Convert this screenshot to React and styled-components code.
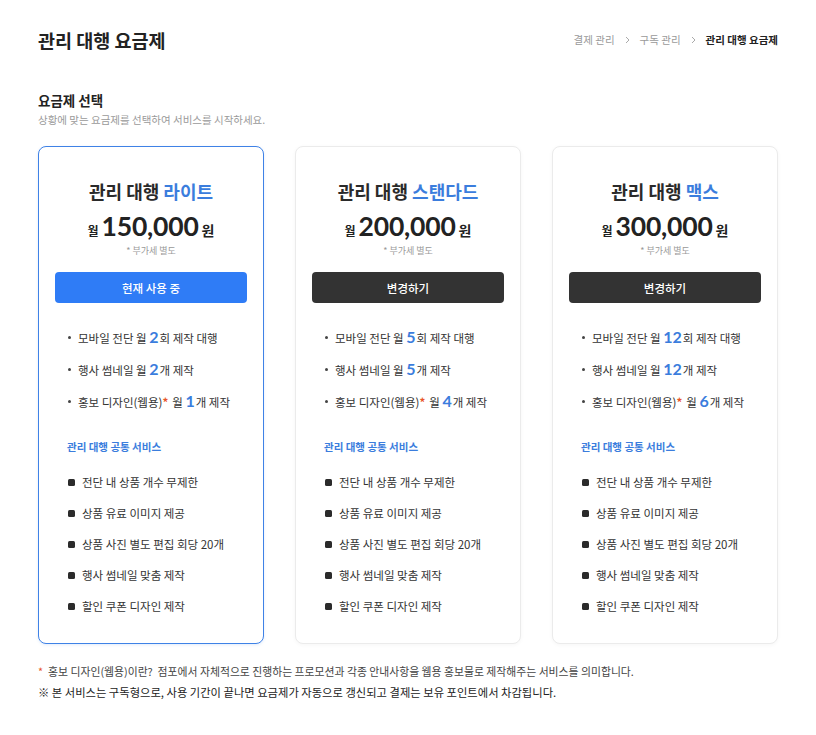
import React from "react";
import styled, { createGlobalStyle } from "styled-components";

const GlobalStyle = createGlobalStyle`
  html, body { margin: 0; padding: 0; background: #ffffff; }
  body {
    font-family: "Noto Sans CJK KR", "Noto Sans", sans-serif;
    color: #333;
    -webkit-font-smoothing: antialiased;
  }
  * { box-sizing: border-box; }
`;

const Page = styled.div`
  width: 816px;
  padding: 26px 38px 30px;
`;

const Header = styled.header`
  display: flex;
  justify-content: space-between;
  align-items: center;
  height: 28px;
`;

const PageTitle = styled.h1`
  margin: 0;
  font-size: 18.5px;
  line-height: 28px;
  font-weight: 700;
  color: #222;
`;

const Breadcrumb = styled.nav`
  display: flex;
  align-items: center;
  gap: 9px;
  font-size: 10.5px;
  line-height: 16px;
`;

const Crumb = styled.span`
  color: ${(p) => (p.$active ? "#222" : "#9a9a9a")};
  font-weight: ${(p) => (p.$active ? 700 : 400)};
`;

const Sep = styled.span`
  display: flex;
  align-items: center;
  padding: 0 1px;
`;

const SectionHead = styled.div`
  margin-top: 37px;
`;

const SectionTitle = styled.h2`
  margin: 0;
  font-size: 13.5px;
  line-height: 18px;
  font-weight: 700;
  color: #222;
`;

const SectionSub = styled.p`
  margin: 4px 0 0;
  font-size: 10.5px;
  line-height: 14px;
  color: #9a9a9a;
`;

const Cards = styled.div`
  margin-top: 19px;
  display: grid;
  grid-template-columns: repeat(3, 1fr);
  gap: 31px;
`;

const Card = styled.div`
  border: 1px solid ${(p) => (p.$current ? "#3f82e6" : "#ebebeb")};
  border-radius: 8px;
  background: #fff;
  box-shadow: ${(p) => (p.$current ? "0 1px 3px rgba(63,130,230,0.15)" : "0 1px 4px rgba(0,0,0,0.04)")};
  padding: 31px 16px 27px;
  height: 498px;
`;

const PlanName = styled.h3`
  margin: 0;
  text-align: center;
  font-size: 18px;
  line-height: 26px;
  font-weight: 700;
  color: #2a2a2a;
`;

const Accent = styled.span`
  color: #3b7ddd;
`;

const PriceRow = styled.div`
  margin-top: 6px;
  display: flex;
  justify-content: center;
  align-items: baseline;
  gap: 3px;
  height: 32px;
  line-height: 32px;
  color: #222;
`;

const Unit = styled.span`
  font-size: ${(p) => p.$size}px;
  font-weight: 700;
`;

const Amount = styled.span`
  font-family: "Lato", "Noto Sans", sans-serif;
  font-size: 26.5px;
  font-weight: 700;
  letter-spacing: -0.2px;
`;

const Vat = styled.div`
  margin-top: 2px;
  text-align: center;
  font-size: 9px;
  line-height: 14px;
  color: #999;
`;

const PlanButton = styled.button`
  display: block;
  width: 100%;
  height: 31px;
  margin-top: 14px;
  border: none;
  border-radius: 4px;
  background: ${(p) => (p.$current ? "#2f7cf6" : "#333333")};
  color: #fff;
  font-family: "Noto Sans CJK KR", "Noto Sans", sans-serif;
  font-size: 11.5px;
  font-weight: 500;
  cursor: pointer;
`;

const Body = styled.div`
  padding: 0 12px;
`;

const Features = styled.ul`
  list-style: none;
  margin: 24px 0 0;
  padding: 0;
  display: flex;
  flex-direction: column;
  gap: 12px;
`;

const Feature = styled.li`
  display: flex;
  align-items: baseline;
  height: 20px;
  font-size: 11.5px;
  line-height: 20px;
  color: #333;
  white-space: nowrap;
`;

const Dot = styled.span`
  flex: none;
  width: 3px;
  height: 3px;
  border-radius: 50%;
  background: #444;
  margin: 0 7px 0 1px;
  align-self: center;
`;

const Num = styled.span`
  font-family: "Lato", "Noto Sans", sans-serif;
  font-size: 16px;
  line-height: 20px;
  font-weight: 700;
  color: #3b7ddd;
  margin-right: 1px;
`;

const Star = styled.span`
  color: #e8562a;
  font-weight: 700;
  margin-right: 4px;
`;

const CommonTitle = styled.div`
  margin-top: 27px;
  font-size: 10.5px;
  line-height: 18px;
  font-weight: 700;
  color: #3b7ddd;
`;

const Services = styled.ul`
  list-style: none;
  margin: 16px 0 0;
  padding: 0;
  display: flex;
  flex-direction: column;
  gap: 11px;
`;

const Service = styled.li`
  display: flex;
  align-items: center;
  font-size: 11.5px;
  line-height: 20px;
  color: #333;
  white-space: nowrap;
`;

const Square = styled.span`
  flex: none;
  width: 7px;
  height: 7px;
  border-radius: 1.5px;
  background: #2b2b2b;
  margin: 0 7px 0 1px;
`;

const Notes = styled.div`
  margin-top: 17px;
  line-height: 21px;
`;

const Note = styled.p`
  margin: 0;
  font-size: ${(p) => (p.$dark ? "11.3px" : "10.85px")};
  font-weight: 400;
  color: ${(p) => (p.$dark ? "#222" : "#444")};
  white-space: nowrap;
`;

const NoteStar = styled.span`
  color: #e8562a;
  margin-right: 5px;
`;

const Chevron = () => (
  <svg width="5" height="8" viewBox="0 0 5 8" fill="none">
    <path d="M1 1 L4 4 L1 7" stroke="#aaa" strokeWidth="1" />
  </svg>
);

const plans = [
  { name: "라이트", price: "150,000", current: true, n: ["2", "2", "1"] },
  { name: "스탠다드", price: "200,000", current: false, n: ["5", "5", "4"] },
  { name: "맥스", price: "300,000", current: false, n: ["12", "12", "6"] },
];

const services = [
  "전단 내 상품 개수 무제한",
  "상품 유료 이미지 제공",
  "상품 사진 별도 편집 회당 20개",
  "행사 썸네일 맞춤 제작",
  "할인 쿠폰 디자인 제작",
];

function PlanCard({ plan }) {
  return (
    <Card $current={plan.current}>
      <PlanName>
        관리 대행 <Accent>{plan.name}</Accent>
      </PlanName>
      <PriceRow>
        <Unit $size={12}>월</Unit>
        <Amount>{plan.price}</Amount>
        <Unit $size={14}>원</Unit>
      </PriceRow>
      <Vat>* 부가세 별도</Vat>
      <PlanButton $current={plan.current}>
        {plan.current ? "현재 사용 중" : "변경하기"}
      </PlanButton>
      <Body>
        <Features>
          <Feature>
            <Dot />
            모바일 전단 월&nbsp;<Num>{plan.n[0]}</Num>회 제작 대행
          </Feature>
          <Feature>
            <Dot />
            행사 썸네일 월&nbsp;<Num>{plan.n[1]}</Num>개 제작
          </Feature>
          <Feature>
            <Dot />
            홍보 디자인(웹용)<Star>*</Star>월&nbsp;<Num>{plan.n[2]}</Num>개 제작
          </Feature>
        </Features>
        <CommonTitle>관리 대행 공통 서비스</CommonTitle>
        <Services>
          {services.map((s) => (
            <Service key={s}>
              <Square />
              {s}
            </Service>
          ))}
        </Services>
      </Body>
    </Card>
  );
}

export default function App() {
  return (
    <>
      <GlobalStyle />
      <Page>
        <Header>
          <PageTitle>관리 대행 요금제</PageTitle>
          <Breadcrumb>
            <Crumb>결제 관리</Crumb>
            <Sep><Chevron /></Sep>
            <Crumb>구독 관리</Crumb>
            <Sep><Chevron /></Sep>
            <Crumb $active>관리 대행 요금제</Crumb>
          </Breadcrumb>
        </Header>
        <SectionHead>
          <SectionTitle>요금제 선택</SectionTitle>
          <SectionSub>상황에 맞는 요금제를 선택하여 서비스를 시작하세요.</SectionSub>
        </SectionHead>
        <Cards>
          {plans.map((p) => (
            <PlanCard key={p.name} plan={p} />
          ))}
        </Cards>
        <Notes>
          <Note>
            <NoteStar>*</NoteStar>홍보 디자인(웹용)이란?&nbsp;&nbsp;점포에서 자체적으로 진행하는 프로모션과 각종 안내사항을 웹용 홍보물로 제작해주는 서비스를 의미합니다.
          </Note>
          <Note $dark>※ 본 서비스는 구독형으로, 사용 기간이 끝나면 요금제가 자동으로 갱신되고 결제는 보유 포인트에서 차감됩니다.</Note>
        </Notes>
      </Page>
    </>
  );
}
